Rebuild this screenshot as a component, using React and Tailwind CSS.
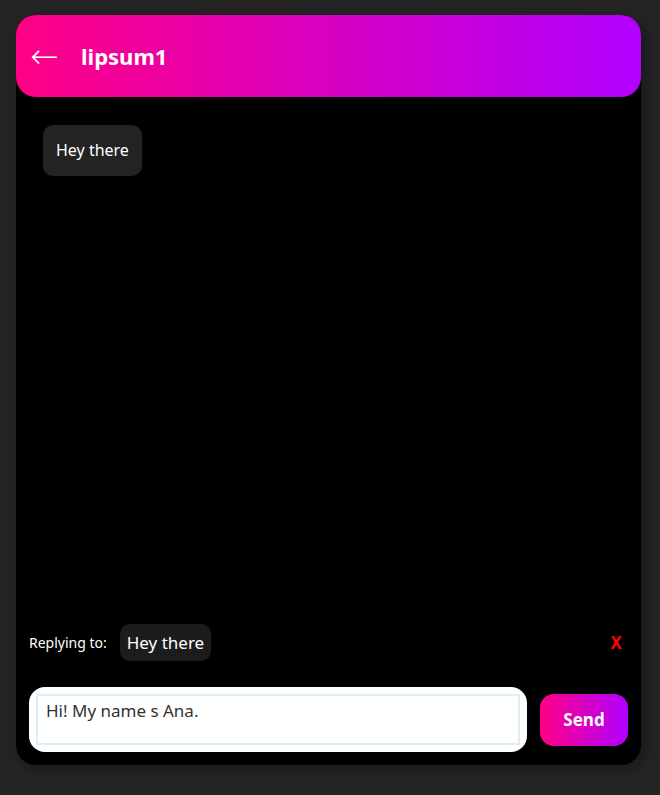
import React from 'react';

export default function App() {
  return (
    <div className="min-h-[795px] w-full bg-[#242424] pt-[15px] pl-[16px] font-['Segoe_UI','Noto_Sans',sans-serif]">
      <div className="flex h-[750px] w-[625px] flex-col rounded-[20px] bg-black shadow-[4px_4px_12px_rgba(0,0,0,0.35)]">
        <div className="flex h-[82px] items-center rounded-[20px] bg-[linear-gradient(to_right,#ff0084,#b000ff)] px-[14px] text-white">
          <span className="w-[51px] font-['DejaVu_Sans',sans-serif] text-[34px] font-extralight leading-none">←</span>
          <span className="text-[22px] font-bold">lipsum1</span>
        </div>

        <div className="flex-1 px-[27px] pt-[28px]">
          <div className="inline-block rounded-[10px] bg-[#232323] px-[13px] py-[14px] text-[16px] leading-[23px] text-white">
            Hey there
          </div>
        </div>

        <div className="flex items-center px-[13px] pb-[26px]">
          <span className="text-[14px] text-white">Replying to:</span>
          <span className="ml-[13px] rounded-[10px] bg-[#1c1c1c] px-[7px] py-[6px] text-[17px] leading-[25px] text-white">
            Hey there
          </span>
          <span className="ml-auto mr-[6px] text-[17px] font-bold text-[#ff0000]">X</span>
        </div>

        <div className="flex items-center gap-[13px] px-[13px] pb-[13px]">
          <div className="h-[65px] w-[498px] rounded-[16px] bg-white px-[7px] py-[7px]">
            <div className="h-full w-full border-2 border-[#dceefa] px-[8px] pt-[2px] text-[17px] text-[#333]">
              Hi! My name s Ana.
            </div>
          </div>
          <button className="h-[52px] w-[88px] rounded-[14px] bg-[linear-gradient(to_right,#ff0084,#b000ff)] text-[17px] font-bold text-white">
            Send
          </button>
        </div>
      </div>
    </div>
  );
}
